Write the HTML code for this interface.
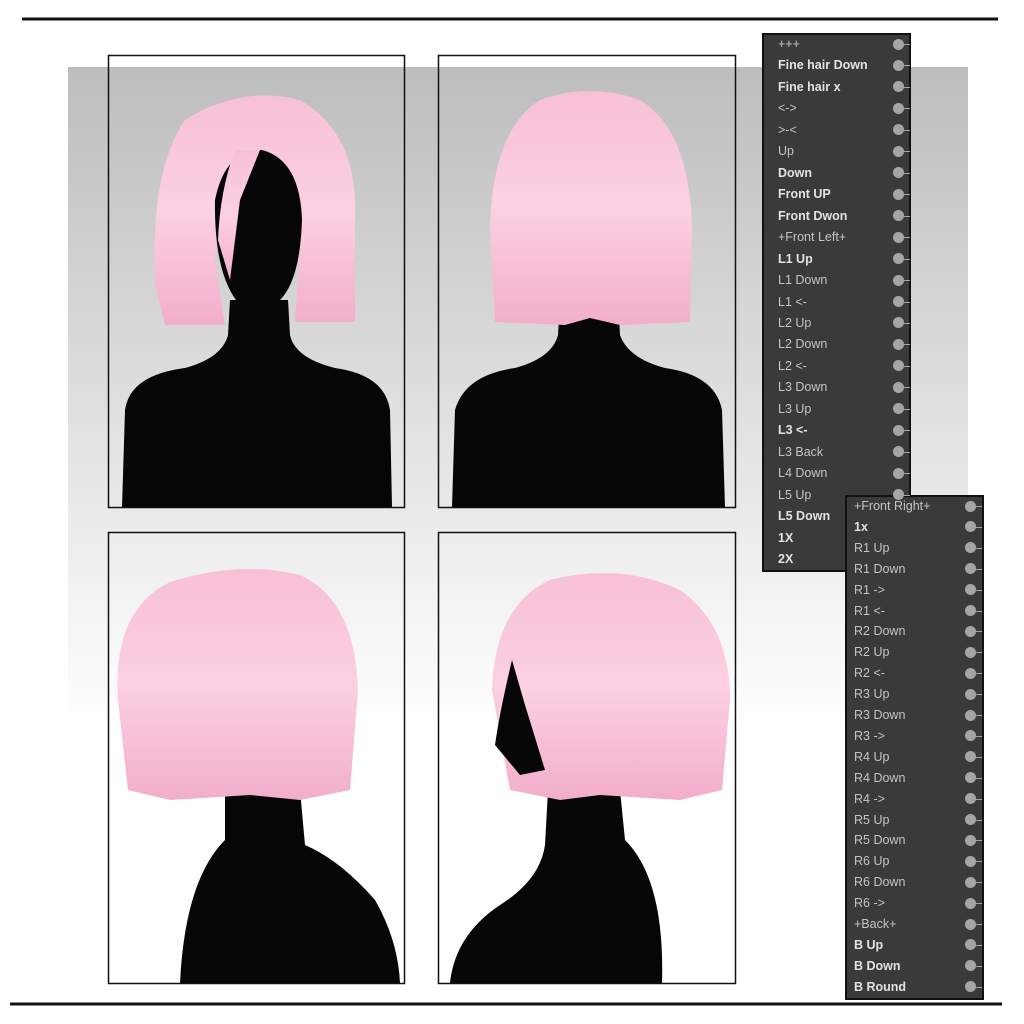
<!DOCTYPE html>
<html><head><meta charset="utf-8"><style>
body{margin:0;width:1024px;height:1024px;background:#fff;position:relative;overflow:hidden;font-family:"Liberation Sans",sans-serif}
.menu{position:absolute;background:#3a3a3a;border:2px solid #111;box-sizing:border-box}
.row{position:absolute;left:14px;font-size:12.5px;color:#c4c4c4;white-space:nowrap;line-height:14px}
.row.b{font-weight:bold;color:#e2e2e2}
.k{position:absolute;width:11px;height:11px;border-radius:50%;background:#a5a5a5}
.l{position:absolute;height:1px;background:#a5a5a5}
</style></head><body>
<svg width="1024" height="1024" style="position:absolute;left:0;top:0">
<defs>
<linearGradient id="bg" x1="0" y1="0" x2="0" y2="1"><stop offset="0" stop-color="#bdbdbd"/><stop offset="0.7" stop-color="#ececec"/><stop offset="1" stop-color="#fff"/></linearGradient>
<linearGradient id="hr" x1="0" y1="0" x2="0" y2="1"><stop offset="0" stop-color="#f7c0d6"/><stop offset="0.5" stop-color="#fcd0e2"/><stop offset="1" stop-color="#f2aecb"/></linearGradient>
</defs>
<line x1="22" y1="19" x2="998" y2="19" stroke="#111" stroke-width="3"/>
<line x1="10" y1="1004" x2="1002" y2="1004" stroke="#111" stroke-width="3"/>
<rect x="68" y="67" width="900" height="660" fill="url(#bg)"/>
<!-- top-left -->
<path d="M122 507 L125 410 Q130 375 185 368 Q222 358 228 335 L230 300 L288 300 L290 335 Q295 358 335 368 Q385 375 390 410 L392 507Z" fill="#060606"/>
<path d="M155 285 Q150 170 185 120 Q240 85 300 100 Q352 130 355 200 L355 322 L295 322 L300 240 Q290 170 255 150 Q220 175 215 260 L225 325 L165 325Z" fill="url(#hr)"/>
<path d="M215 200 Q225 150 262 150 Q300 160 302 220 Q300 280 280 300 L258 312 L236 300 Q214 270 215 200Z" fill="#060606"/>
<path d="M235 150 Q220 190 218 240 L230 280 L240 200 L260 150Z" fill="url(#hr)"/>
<!-- top-right -->
<path d="M452 507 L455 410 Q465 375 515 368 Q552 358 558 335 L560 300 L618 300 L620 335 Q628 358 665 368 Q715 375 722 410 L725 507Z" fill="#060606"/>
<path d="M490 230 Q492 130 540 100 Q590 82 640 100 Q690 130 692 230 L690 322 L620 325 L590 318 L565 325 L495 322Z" fill="url(#hr)"/>
<!-- bottom-left -->
<path d="M180 983 Q185 880 225 840 L225 790 L300 790 L305 845 Q340 860 375 900 Q398 940 400 983Z" fill="#060606"/>
<path d="M118 700 Q112 610 170 582 Q240 560 300 575 Q355 600 358 690 L350 790 L300 800 L250 795 L170 800 L128 790Z" fill="url(#hr)"/>
<!-- bottom-right -->
<path d="M450 983 Q455 935 500 905 Q540 880 545 845 L548 790 L620 790 L625 840 Q665 880 662 983Z" fill="#060606"/>
<path d="M492 690 Q495 605 550 580 Q620 562 680 590 Q730 625 730 700 L722 790 L680 800 L600 795 L560 800 L510 790Z" fill="url(#hr)"/>
<path d="M512 660 Q500 710 495 745 L520 775 L545 770 L525 705Z" fill="#060606"/>
<g fill="none" stroke="#111" stroke-width="1.5">
<rect x="108.5" y="55.5" width="296" height="452"/>
<rect x="438.5" y="55.5" width="297" height="452"/>
<rect x="108.5" y="532.5" width="296" height="451"/>
<rect x="438.5" y="532.5" width="297" height="451"/>
</g>
</svg>
<div class="menu" style="left:762px;top:33px;width:149px;height:539px"></div>
<div class="menu" style="left:845px;top:495px;width:139px;height:505px"></div>
<div id="m1"></div>
<script>
const a=[["+++",0],["Fine hair Down",1],["Fine hair x",1],["<->",0],[">-<",0],["Up",0],["Down",1],["Front UP",1],["Front Dwon",1],["+Front Left+",0],["L1 Up",1],["L1 Down",0],["L1 <-",0],["L2 Up",0],["L2 Down",0],["L2 <-",0],["L3 Down",0],["L3 Up",0],["L3 <-",1],["L3 Back",0],["L4 Down",0],["L5 Up",0],["L5 Down",1],["1X",1],["2X",1]];
const b=[["+Front Right+",0],["1x",1],["R1 Up",0],["R1 Down",0],["R1 ->",0],["R1 <-",0],["R2 Down",0],["R2 Up",0],["R2 <-",0],["R3 Up",0],["R3 Down",0],["R3 ->",0],["R4 Up",0],["R4 Down",0],["R4 ->",0],["R5 Up",0],["R5 Down",0],["R6 Up",0],["R6 Down",0],["R6 ->",0],["+Back+",0],["B Up",1],["B Down",1],["B Round",1]];
let h="";
a.forEach((r,i)=>{const y=44+i*21.46;h+=`<div class="row${r[1]?' b':''}" style="left:778px;top:${y-7}px">${r[0].replace(/</g,'&lt;')}</div>`;if(i<22){h+=`<div class="k" style="left:893px;top:${y-5.5}px"></div><div class="l" style="left:900px;top:${y}px;width:10px"></div>`}});
b.forEach((r,i)=>{const y=506+i*20.9;h+=`<div class="row${r[1]?' b':''}" style="left:854px;top:${y-7}px">${r[0].replace(/</g,'&lt;')}</div><div class="k" style="left:965px;top:${y-5.5}px"></div><div class="l" style="left:972px;top:${y}px;width:10px"></div>`});
document.getElementById("m1").innerHTML=h;
</script>
</body></html>
